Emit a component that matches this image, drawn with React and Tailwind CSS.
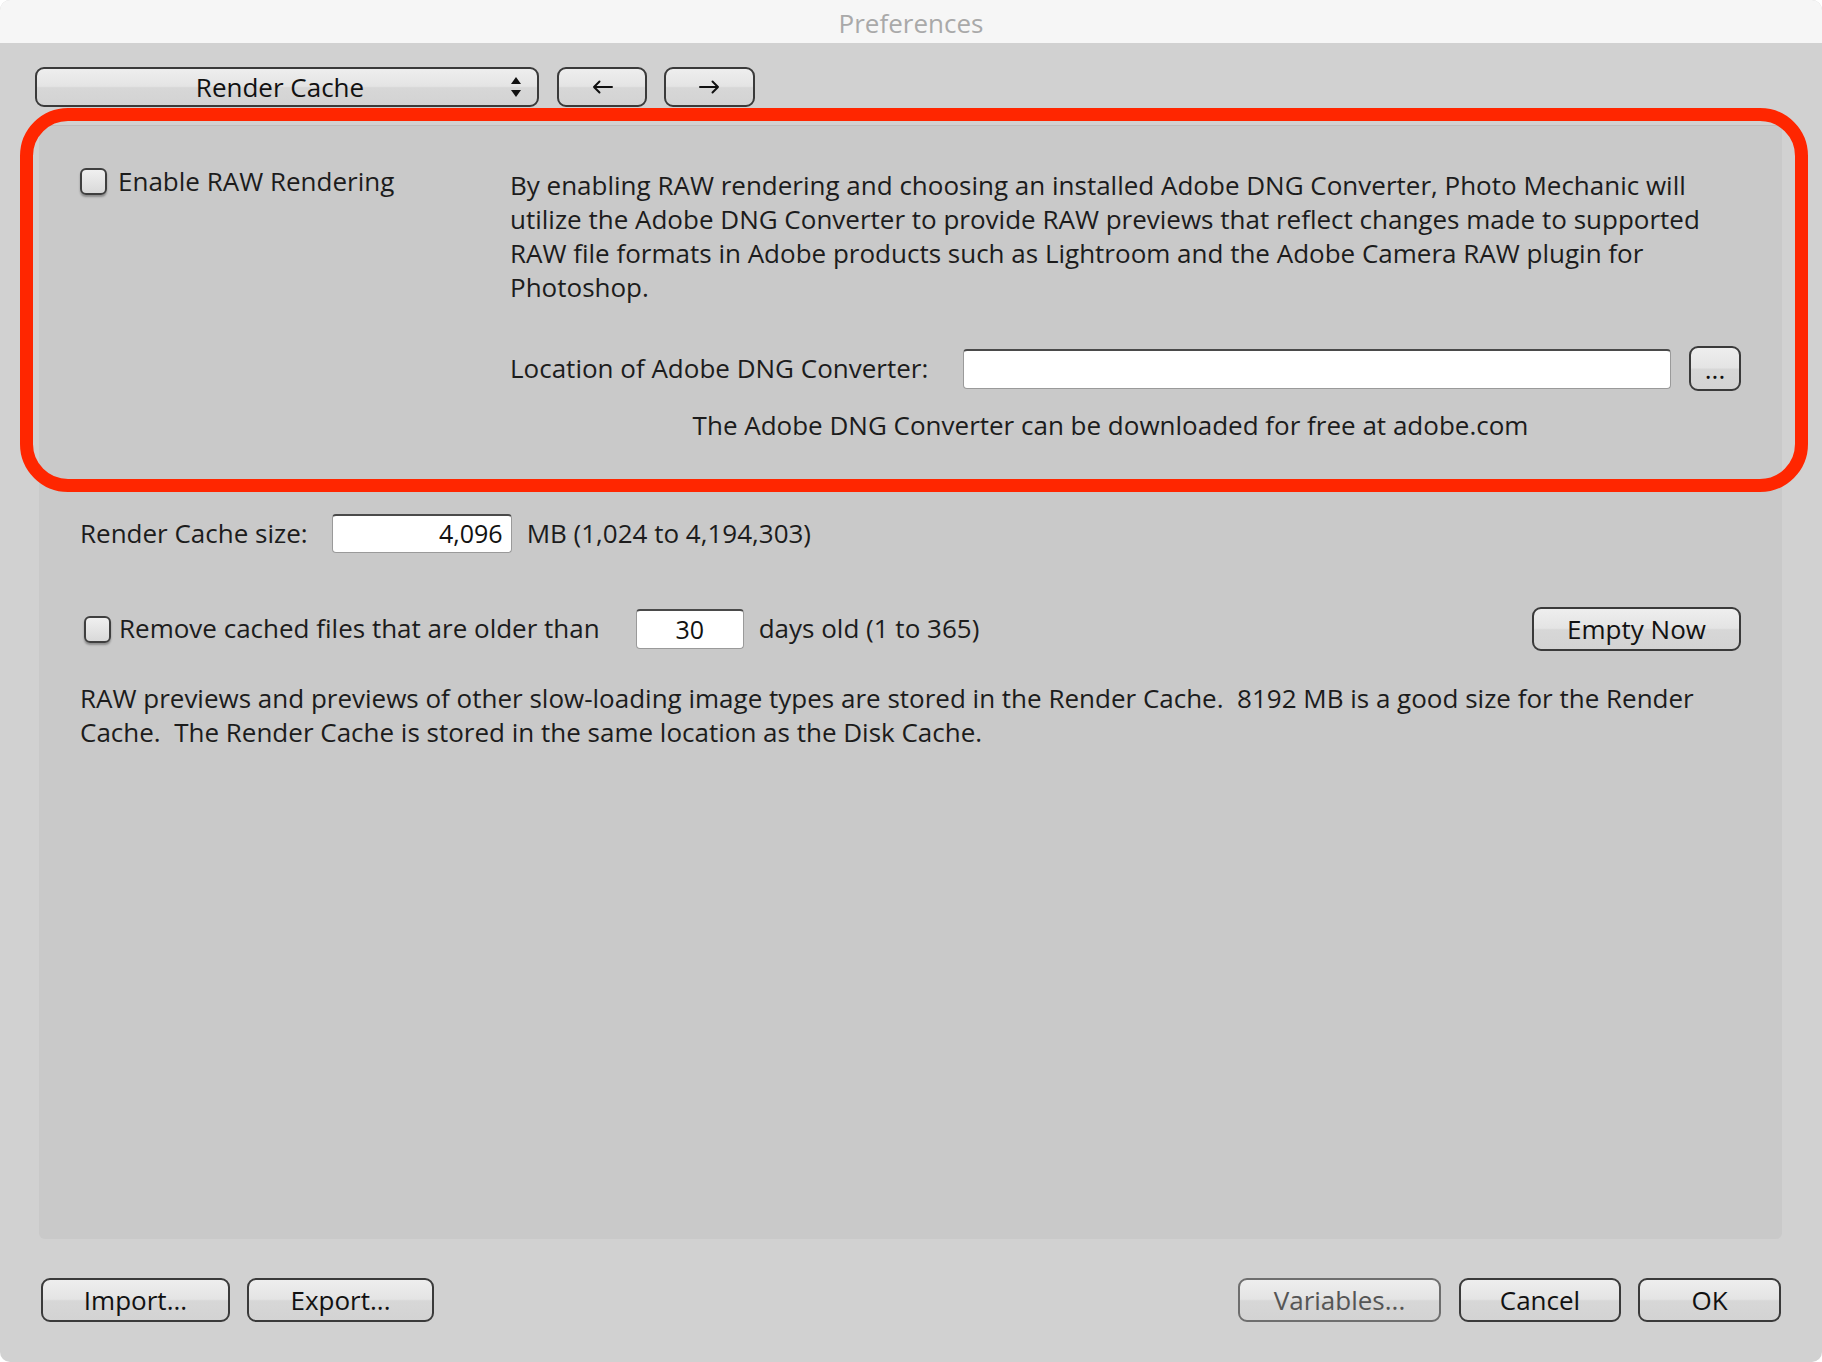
import React from "react";

const font = "font-['Open_Sans','Liberation_Sans',sans-serif]";

function MacButton({ children, className = "", disabled = false }) {
  return (
    <button
      className={`flex items-center justify-center rounded-[9px] border-2 bg-[linear-gradient(#eeeeee,#e4e4e4_48%,#d7d7d7_52%,#d3d3d3)] text-[26px] leading-none ${
        disabled ? "border-[#6e6e6e] text-[#555555]" : "border-[#3a3a3a] text-[#111111]"
      } ${className}`}
    >
      {children}
    </button>
  );
}

function Checkbox({ className = "" }) {
  return (
    <span
      className={`block h-[27px] w-[27px] shrink-0 rounded-[6px] border-2 border-[#3f3f3f] bg-[linear-gradient(#f0f0f0,#d9d9d9)] shadow-[0_2px_2px_rgba(0,0,0,0.3)] ${className}`}
    />
  );
}

function TextField({ value = "", className = "", align = "text-left" }) {
  return (
    <div
      className={`flex items-center rounded-[4px] border border-[#9a9a9a] border-t-2 border-t-[#4a4a4a] bg-white px-[8px] text-[25px] text-[#111111] ${align} ${className}`}
    >
      <span className="w-full">{value}</span>
    </div>
  );
}

function Arrow({ dir }) {
  return (
    <svg width="21" height="14" viewBox="0 0 21 14" fill="none" stroke="#111" strokeWidth="2" strokeLinecap="round" strokeLinejoin="round">
      {dir === "left" ? (
        <path d="M20 7H2M7.5 1.5L2 7l5.5 5.5" />
      ) : (
        <path d="M1 7h18M13.5 1.5L19 7l-5.5 5.5" />
      )}
    </svg>
  );
}

const description = [
  "By enabling RAW rendering and choosing an installed Adobe DNG Converter, Photo Mechanic will",
  "utilize the Adobe DNG Converter to provide RAW previews that reflect changes made to supported",
  "RAW file formats in Adobe products such as Lightroom and the Adobe Camera RAW plugin for",
  "Photoshop.",
];

export default function App() {
  return (
    <div className={`h-[1362px] w-[1822px] bg-white ${font}`}>
      <div className="relative flex h-full w-full flex-col overflow-hidden rounded-[10px] bg-[#d1d1d1]">
        {/* title bar */}
        <div className="flex h-[43px] shrink-0 items-center justify-center bg-[#f6f6f6] pt-[3px] text-[26px] text-[#a9a9a9]">
          Preferences
        </div>

        {/* toolbar */}
        <div className="flex items-center pl-[35px] pt-[24px]">
          <MacButton className="relative h-[40px] w-[504px] pr-[14px]">
            <span>Render Cache</span>
            <span className="absolute right-[16px] top-[8px] flex flex-col items-center gap-[6px]">
              <svg width="10" height="7" viewBox="0 0 10 7"><path d="M5 0L10 7H0z" fill="#111" /></svg>
              <svg width="10" height="7" viewBox="0 0 10 7"><path d="M0 0h10L5 7z" fill="#111" /></svg>
            </span>
          </MacButton>
          <MacButton className="ml-[18px] h-[40px] w-[90px]">
            <Arrow dir="left" />
          </MacButton>
          <MacButton className="ml-[17px] h-[40px] w-[91px]">
            <Arrow dir="right" />
          </MacButton>
        </div>

        {/* content panel */}
        <div className="ml-[39px] mr-[40px] mt-[18px] flex-1 rounded-[6px] border-t border-[#bdbdbd] bg-[#c9c9c9] px-[41px] pt-[42px] text-[26px] text-[#1c1c1c]">
          <div className="flex">
            <div className="flex w-[430px] shrink-0 items-center gap-[11px] self-start">
              <Checkbox />
              <span className="leading-[27px]">Enable RAW Rendering</span>
            </div>
            <div className="flex-1">
              <div className="leading-[34px]">
                {description.map((line) => (
                  <div key={line} className="whitespace-nowrap">{line}</div>
                ))}
              </div>
              <div className="mt-[42px] flex items-center">
                <span className="w-[420px] shrink-0">Location of Adobe DNG Converter:</span>
                <TextField className="ml-[33px] h-[40px] flex-1" />
                <MacButton className="ml-[18px] h-[45px] w-[52px] text-[16px]">...</MacButton>
              </div>
              <div className="mt-[17px] pr-[30px] text-center leading-[34px]">
                The Adobe DNG Converter can be downloaded for free at adobe.com
              </div>
            </div>
          </div>

          <div className="mt-[72px] flex items-center">
            <span>Render Cache size:</span>
            <TextField value="4,096" align="text-right" className="ml-[24px] h-[39px] w-[180px]" />
            <span className="ml-[15px]">MB (1,024 to 4,194,303)</span>
          </div>

          <div className="mt-[54px] flex items-center">
            <Checkbox className="ml-[4px]" />
            <span className="ml-[8px] -mt-[2px]">Remove cached files that are older than</span>
            <TextField value="30" align="text-center" className="ml-[36px] h-[40px] w-[108px]" />
            <span className="ml-[15px] -mt-[2px]">days old (1 to 365)</span>
            <MacButton className="ml-auto h-[44px] w-[209px]">Empty Now</MacButton>
          </div>

          <div className="mt-[30px] leading-[34px]">
            <div className="whitespace-pre">RAW previews and previews of other slow-loading image types are stored in the Render Cache.  8192 MB is a good size for the Render</div>
            <div className="whitespace-pre">Cache.  The Render Cache is stored in the same location as the Disk Cache.</div>
          </div>
        </div>

        {/* footer */}
        <div className="flex items-center px-[41px] pb-[40px] pt-[39px]">
          <MacButton className="h-[44px] w-[189px]">Import...</MacButton>
          <MacButton className="ml-[17px] h-[44px] w-[187px]">Export...</MacButton>
          <MacButton disabled className="ml-auto h-[44px] w-[203px]">Variables...</MacButton>
          <MacButton className="ml-[18px] h-[44px] w-[162px]">Cancel</MacButton>
          <MacButton className="ml-[17px] h-[44px] w-[143px]">OK</MacButton>
        </div>

        {/* red highlight annotation */}
        <div className="pointer-events-none absolute left-[20px] top-[108px] h-[384px] w-[1788px] rounded-[48px] border-[13px] border-[#ff2600]" />
      </div>
    </div>
  );
}
